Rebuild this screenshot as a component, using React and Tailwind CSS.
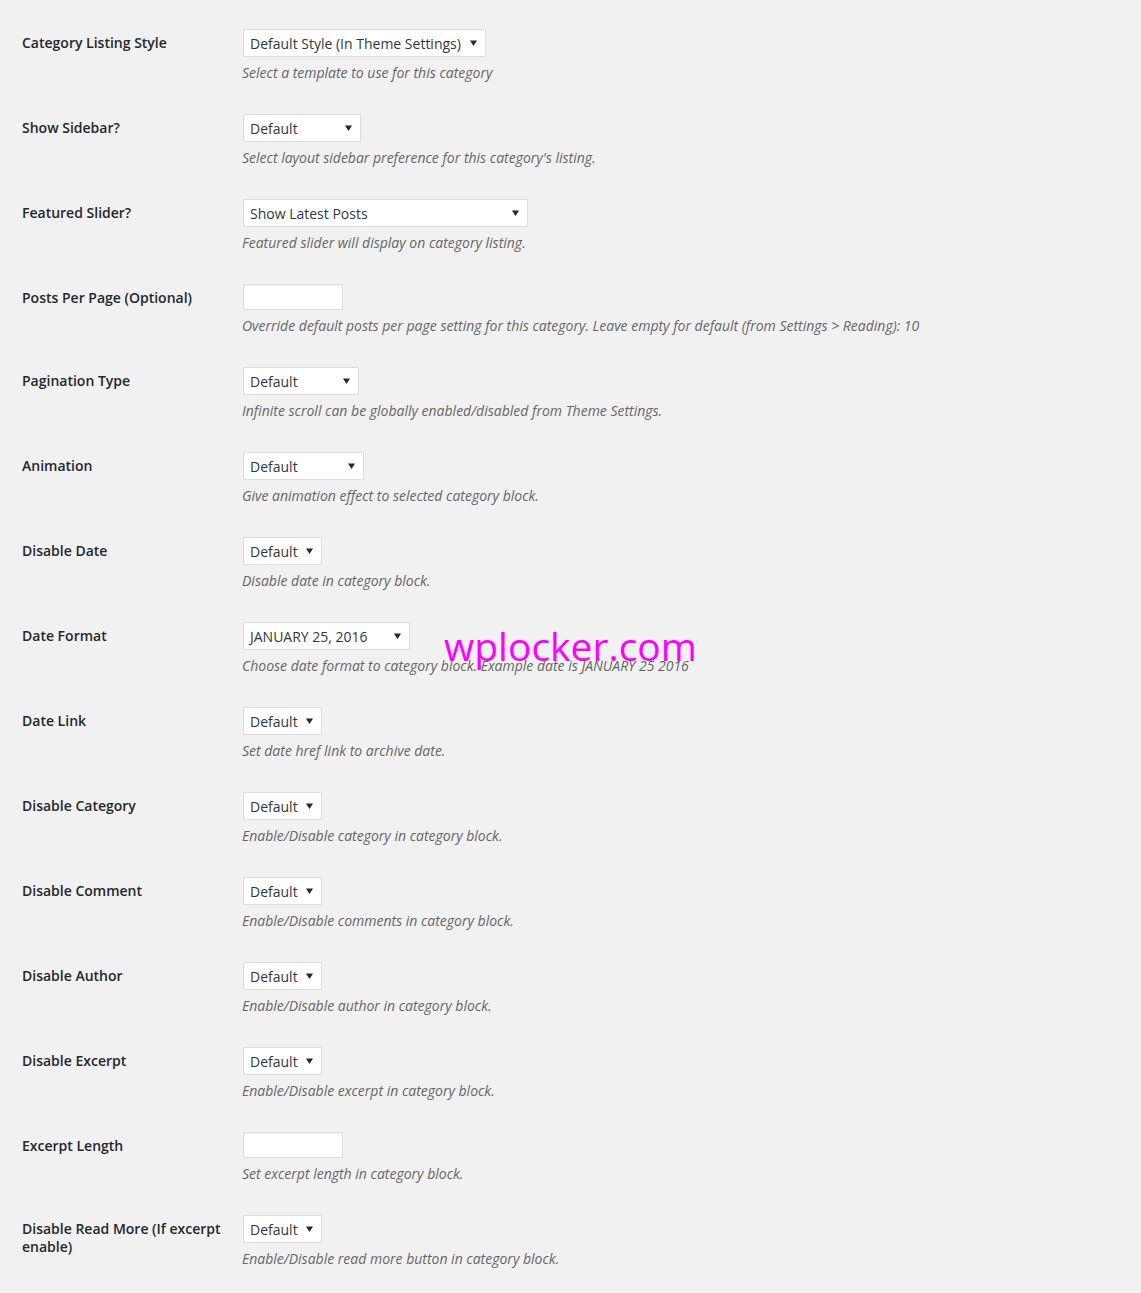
import React from "react";

const rows = [
  { label: "Category Listing Style", type: "select", value: "Default Style (In Theme Settings)", w: "w-[243px]", desc: "Select a template to use for this category" },
  { label: "Show Sidebar?", type: "select", value: "Default", w: "w-[118px]", desc: "Select layout sidebar preference for this category's listing." },
  { label: "Featured Slider?", type: "select", value: "Show Latest Posts", w: "w-[285px]", desc: "Featured slider will display on category listing." },
  { label: "Posts Per Page (Optional)", type: "input", desc: "Override default posts per page setting for this category. Leave empty for default (from Settings > Reading): 10" },
  { label: "Pagination Type", type: "select", value: "Default", w: "w-[116px]", desc: "Infinite scroll can be globally enabled/disabled from Theme Settings." },
  { label: "Animation", type: "select", value: "Default", w: "w-[121px]", desc: "Give animation effect to selected category block." },
  { label: "Disable Date", type: "select", value: "Default", w: "w-[79px]", desc: "Disable date in category block." },
  { label: "Date Format", type: "select", value: "JANUARY 25, 2016", w: "w-[167px]", desc: "Choose date format to category block. Example date is JANUARY 25 2016" },
  { label: "Date Link", type: "select", value: "Default", w: "w-[79px]", desc: "Set date href link to archive date." },
  { label: "Disable Category", type: "select", value: "Default", w: "w-[79px]", desc: "Enable/Disable category in category block." },
  { label: "Disable Comment", type: "select", value: "Default", w: "w-[79px]", desc: "Enable/Disable comments in category block." },
  { label: "Disable Author", type: "select", value: "Default", w: "w-[79px]", desc: "Enable/Disable author in category block." },
  { label: "Disable Excerpt", type: "select", value: "Default", w: "w-[79px]", desc: "Enable/Disable excerpt in category block." },
  { label: "Excerpt Length", type: "input", desc: "Set excerpt length in category block." },
  { label: "Disable Read More (If excerpt enable)", type: "select", value: "Default", w: "w-[79px]", desc: "Enable/Disable read more button in category block." },
];

function Select({ value, w }) {
  return (
    <div className={`${w} ml-px h-[28px] flex items-center justify-between bg-white border border-[#dddddd] pl-[6px] pr-[8px] text-[14px] text-[#32373c] whitespace-nowrap`}>
      <span>{value}</span>
      <svg width="7" height="6" viewBox="0 0 7 6" className="shrink-0">
        <path d="M0 0.5 L7 0.5 L3.5 6 Z" fill="#23282d" />
      </svg>
    </div>
  );
}

function Input() {
  return (
    <div className="w-[100px] ml-px h-[26px] bg-white border border-[#dddddd] shadow-[inset_0_1px_2px_rgba(0,0,0,0.07)]" />
  );
}

export default function App() {
  return (
    <div
      className="relative min-h-[1293px] w-full bg-[#f1f1f1] pl-[22px] pt-[13px]"
      style={{ fontFamily: '"Open Sans", "Noto Sans", sans-serif' }}
    >
      {rows.map((r, i) => (
        <div key={i} className={`flex ${r.type === "input" ? "h-[83px]" : "h-[85px]"}`}>
          <div className="w-[220px] shrink-0 pt-[21px]">
            <div className="w-[200px] text-[14px] leading-[18px] font-semibold text-[#23282d]">{r.label}</div>
          </div>
          <div className="pt-[16px]">
            {r.type === "select" ? <Select value={r.value} w={r.w} /> : <Input />}
            <p className="mt-[5px] text-[14px] leading-[21px] italic text-[#666666] whitespace-nowrap">{r.desc}</p>
          </div>
        </div>
      ))}
      <div className="absolute left-[444px] top-[626px] text-[39px] leading-none text-[#ff00ff] pointer-events-none">
        wplocker.com
      </div>
    </div>
  );
}
